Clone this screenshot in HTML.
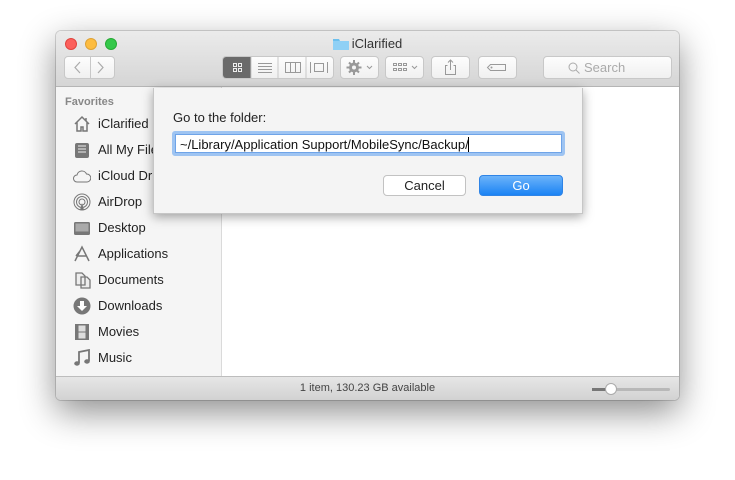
<!DOCTYPE html>
<html><head><meta charset="utf-8"><style>
*{box-sizing:border-box;margin:0;padding:0}
body{width:735px;height:480px;background:#fff;font-family:"Liberation Sans",sans-serif;position:relative;overflow:hidden}
.win{position:absolute;left:56px;top:31px;width:623px;height:369px;border-radius:5px;overflow:hidden;box-shadow:0 12px 35px rgba(0,0,0,.45),0 0 0 1px rgba(0,0,0,.15);background:#fff}
.tb{position:absolute;left:0;top:0;width:623px;height:56px;background:linear-gradient(#ebebeb,#d5d5d5);border-bottom:1px solid #b5b5b5}
.dot{position:absolute;top:7px;width:12px;height:12px;border-radius:50%}
.title{position:absolute;top:5px;left:0;width:623px;text-align:center;font-size:13px;color:#333}
.btn{position:absolute;top:25px;height:23px;background:linear-gradient(#fdfdfd,#f0f0f0);border:1px solid #c8c8c8;border-radius:4px}
.side{position:absolute;left:0;top:56px;width:166px;height:289px;background:#f5f5f5;border-right:1px solid #dadada}
.item{position:absolute;left:42px;font-size:13px;color:#222}
.ic{position:absolute;left:17px;width:18px;height:18px}
.status{position:absolute;left:0;top:345px;width:623px;height:24px;background:linear-gradient(#e6e6e6,#d2d2d2);border-top:1px solid #bdbdbd;font-size:11px;color:#444;text-align:center;line-height:22px}
.dlg{position:absolute;left:153px;top:88px;width:430px;height:126px;background:#f4f4f4;box-shadow:0 3px 10px rgba(0,0,0,.35);border:1px solid #c6c6c6;border-top:none}
</style></head><body>
<div class="win">
 <div class="tb">
  <div class="dot" style="left:9px;background:#fc605c;border:1px solid #e0443e"></div>
  <div class="dot" style="left:29px;background:#fdbc40;border:1px solid #dea236"></div>
  <div class="dot" style="left:49px;background:#34c84a;border:1px solid #27aa35"></div>
  <div class="title"><svg width="16" height="13" style="vertical-align:-2px;margin-right:3px"><path d="M0 2h6l1 2h9v9H0z" fill="#6cc0ee"/><path d="M0 4h16v9H0z" fill="#8fd0f5"/></svg>iClarified</div>
  <div class="btn" style="left:8px;width:51px"><div style="position:absolute;left:25px;top:0;width:1px;height:21px;background:#c8c8c8"></div>
   <svg width="49" height="21" style="position:absolute;left:0;top:0"><path d="M15 5l-5 5.5 5 5.5M33 5l5 5.5-5 5.5" stroke="#aaa" fill="none" stroke-width="1.2"/></svg></div>
  <div class="btn" style="left:166px;width:112px;overflow:hidden">
   <div style="position:absolute;left:0;top:0;width:28px;height:21px;background:#6a6a6a"></div>
   <svg width="110" height="21" style="position:absolute;left:0;top:0">
    <g fill="none" stroke="#eee"><rect x="10.5" y="6.5" width="3" height="3"/><rect x="15.5" y="6.5" width="3" height="3"/><rect x="10.5" y="11.5" width="3" height="3"/><rect x="15.5" y="11.5" width="3" height="3"/></g>
    <g stroke="#999"><path d="M35 6.5h14M35 9.5h14M35 12.5h14M35 15.5h14"/><rect x="62.5" y="5.5" width="15" height="10" fill="none"/><path d="M67.5 5.5v10M72.5 5.5v10"/><rect x="91.5" y="6.5" width="9" height="8" fill="none"/><path d="M87.5 5v11M104.5 5v11"/></g>
    <path d="M28 0v21M55 0v21M83 0v21" stroke="#c8c8c8"/></svg></div>
  <div class="btn" style="left:284px;width:39px"><svg width="37" height="21"><circle cx="13" cy="10.5" r="5" fill="#999"/><circle cx="13" cy="10.5" r="2" fill="#f5f5f5"/><path d="M13 3v15M5.5 10.5h15M8 5.5l10 10M18 5.5l-10 10" stroke="#999" stroke-width="2"/><circle cx="13" cy="10.5" r="2" fill="#f5f5f5"/><path d="M26 9l2.5 2.5L31 9" stroke="#999" fill="none"/></svg></div>
  <div class="btn" style="left:329px;width:39px"><svg width="37" height="21"><g fill="none" stroke="#999"><rect x="7.5" y="6.5" width="3" height="2"/><rect x="12.5" y="6.5" width="3" height="2"/><rect x="17.5" y="6.5" width="3" height="2"/><rect x="7.5" y="11.5" width="3" height="2"/><rect x="12.5" y="11.5" width="3" height="2"/><rect x="17.5" y="11.5" width="3" height="2"/><path d="M26 9l2.5 2.5L31 9"/></g></svg></div>
  <div class="btn" style="left:375px;width:39px"><svg width="37" height="21"><path d="M15.5 8.5h-2v9h10v-9h-2M18.5 3v10M16 5.5l2.5-2.5 2.5 2.5" stroke="#999" fill="none"/></svg></div>
  <div class="btn" style="left:422px;width:39px"><svg width="37" height="21"><path d="M11.5 7.5h15v6h-15l-3-3z" stroke="#999" fill="none"/><circle cx="12.5" cy="10.5" r="1" fill="#999"/></svg></div>
  <div class="btn" style="left:487px;width:129px;font-size:13px;color:#aaa;line-height:21px;padding-left:40px"><svg width="12" height="12" style="position:absolute;left:24px;top:5px"><circle cx="5" cy="5" r="4" stroke="#aaa" fill="none"/><path d="M8 8l3.5 3.5" stroke="#aaa"/></svg>Search</div>
 </div>
 <div class="side">
  <div style="position:absolute;left:9px;top:9px;font-size:11px;color:#888;font-weight:bold">Favorites</div>
  <svg class="ic" style="top:28px"><path d="M2 9L9 2l7 7M4 7.5V16h4v-4h2v4h4V7.5M13 3v3" stroke="#777" fill="none" stroke-width="1.5"/></svg><div class="item" style="top:29px">iClarified</div>
  <svg class="ic" style="top:54px"><rect x="2" y="2" width="14" height="15" rx="2" fill="#777"/><path d="M5 5h8M5 8h8M5 11h8" stroke="#eee"/></svg><div class="item" style="top:55px">All My Files</div>
  <svg class="ic" style="top:80px"><path d="M4 15a3.5 3.5 0 010-7 5 5 0 019.5-1 4 4 0 01.5 8z" stroke="#777" fill="none"/></svg><div class="item" style="top:81px">iCloud Drive</div>
  <svg class="ic" style="top:106px"><g stroke="#777" fill="none"><circle cx="9" cy="9" r="8"/><circle cx="9" cy="9" r="5.5"/><circle cx="9" cy="9" r="3"/></g><path d="M7 17l2-7 2 7z" fill="#777"/></svg><div class="item" style="top:107px">AirDrop</div>
  <svg class="ic" style="top:132px"><rect x="1" y="3" width="16" height="13" rx="1.5" fill="#777"/><rect x="2.5" y="4.5" width="13" height="8" fill="#aaa"/></svg><div class="item" style="top:133px">Desktop</div>
  <svg class="ic" style="top:158px"><path d="M2 16L9 2l7 14M4 11h10M7 6l-4 5" stroke="#777" fill="none" stroke-width="1.5"/></svg><div class="item" style="top:159px">Applications</div>
  <svg class="ic" style="top:184px"><path d="M3 2h6l3 3v9H3zM8 6h6l3 3v8H8z" stroke="#777" fill="#eee" stroke-width="1.3"/></svg><div class="item" style="top:185px">Documents</div>
  <svg class="ic" style="top:210px"><circle cx="9" cy="9" r="8.5" fill="#777"/><path d="M7 4h4v5h3l-5 5-5-5h3z" fill="#fff"/></svg><div class="item" style="top:211px">Downloads</div>
  <svg class="ic" style="top:236px"><rect x="2" y="1" width="14" height="16" fill="#777"/><rect x="5.5" y="2.5" width="7" height="6" fill="#ddd"/><rect x="5.5" y="9.5" width="7" height="6" fill="#ddd"/></svg><div class="item" style="top:237px">Movies</div>
  <svg class="ic" style="top:262px"><path d="M6 14V3l10-2v11" stroke="#777" fill="none" stroke-width="1.8"/><ellipse cx="4" cy="14.5" rx="2.8" ry="2.2" fill="#777"/><ellipse cx="14" cy="12.5" rx="2.8" ry="2.2" fill="#777"/></svg><div class="item" style="top:263px">Music</div>
 </div>
 <div class="status">1 item, 130.23 GB available
  <div style="position:absolute;left:536px;top:11px;width:78px;height:3px;border-radius:2px;background:#b8b8b8"></div>
  <div style="position:absolute;left:536px;top:11px;width:18px;height:3px;background:#777"></div>
  <div style="position:absolute;left:549px;top:6px;width:12px;height:12px;border-radius:50%;background:#fff;border:1px solid #aaa"></div>
 </div>
</div>
<div class="dlg">
 <div style="position:absolute;left:19px;top:22px;font-size:13px;color:#222">Go to the folder:</div>
 <div style="position:absolute;left:18px;top:43px;width:393px;height:25px;border:3px solid #9ec4f2;border-radius:3px;background:#fff"><div style="position:absolute;left:0;top:0;right:0;bottom:0;border:1px solid #6fa4e8;padding:2px 4px;font-size:13px;color:#111;white-space:nowrap">~/Library/Application Support/MobileSync/Backup/<span style="border-left:1px solid #000;margin-left:-1px"></span></div></div>
 <div style="position:absolute;left:229px;top:87px;width:83px;height:21px;background:#fff;border:1px solid #c2c2c2;border-radius:4px;font-size:13px;text-align:center;line-height:19px;color:#222">Cancel</div>
 <div style="position:absolute;left:325px;top:87px;width:84px;height:21px;background:linear-gradient(#6cb3fa,#1b83f4);border:1px solid #2f84e6;border-radius:4px;font-size:13px;text-align:center;line-height:19px;color:#fff">Go</div>
</div>
</body></html>
